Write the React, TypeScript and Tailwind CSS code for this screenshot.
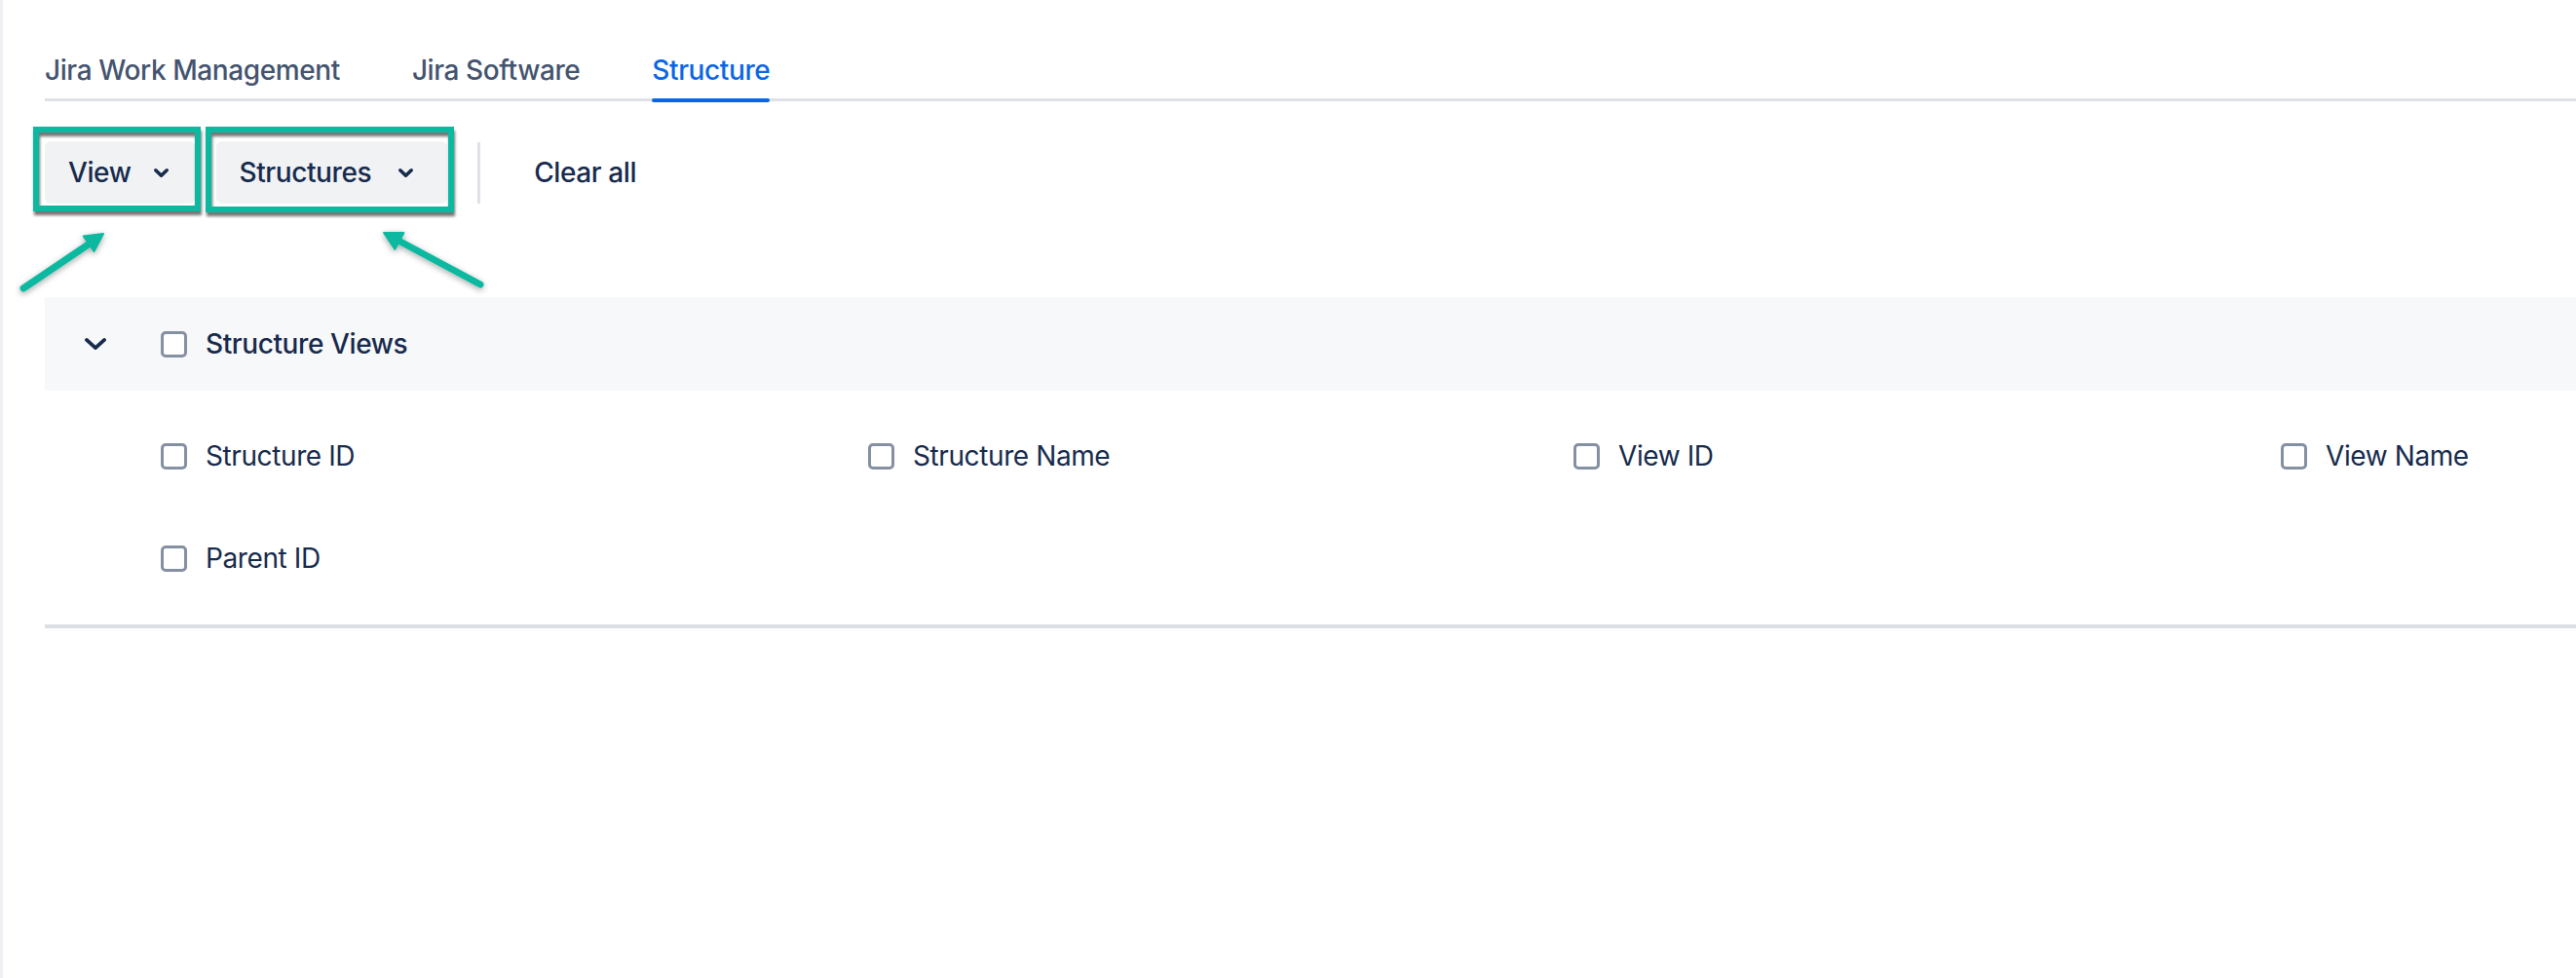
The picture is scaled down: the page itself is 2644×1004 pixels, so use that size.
import React from "react";

const Chevron = ({ w, h, sw }: { w: number; h: number; sw: number }) => (
  <svg width={w} height={h} viewBox={`0 0 ${w} ${h}`} fill="none">
    <path
      d={`M${sw / 2 + 1} ${sw / 2 + 1} L${w / 2} ${h - sw / 2 - 1} L${w - sw / 2 - 1} ${sw / 2 + 1}`}
      stroke="#172b4d"
      strokeWidth={sw}
      strokeLinecap="round"
      strokeLinejoin="round"
    />
  </svg>
);

const Checkbox = () => (
  <span className="block w-[27px] h-[27px] rounded-[5px] border-[3.5px] border-[#8590a2] bg-white shrink-0" />
);

const Item = ({ label }: { label: string }) => (
  <div className="flex items-center gap-[19px] h-[28px]">
    <Checkbox />
    <span className="text-[28px] leading-[40px] text-[#172b4d]">{label}</span>
  </div>
);

export default function App() {
  return (
    <div className="relative min-h-screen w-full overflow-hidden bg-white border-l-[3px] border-[#eef0f3] font-['Inter','Liberation_Sans',sans-serif] tracking-[-0.4px]">
      <div className="pl-[43px] pt-[52px]">
        {/* Tabs */}
        <div className="flex gap-[74px] border-b-[3px] border-[#dfe1e6] text-[28px] font-medium leading-[40px]">
          <div className="pb-[9px] text-[#44546f]">Jira Work Management</div>
          <div className="pb-[9px] text-[#44546f]">Jira Software</div>
          <div className="relative pb-[9px] text-[#0c66e4]">
            Structure
            <span className="absolute left-0 right-0 -bottom-[4px] h-[4px] rounded-[2px] bg-[#0c66e4]" />
          </div>
        </div>

        {/* Toolbar */}
        <div className="mt-[41px] flex items-center h-[64px]">
          <button className="flex items-center h-[64px] pl-[24px] pr-[26px] gap-[22px] rounded-[6px] bg-[#f1f2f4] text-[28px] font-medium text-[#172b4d]">
            <span>View</span>
            <Chevron w={17} h={11} sw={3.6} />
          </button>
          <button className="ml-[22px] flex items-center h-[64px] pl-[24px] pr-[34px] gap-[27px] rounded-[6px] bg-[#f1f2f4] text-[28px] font-medium text-[#172b4d]">
            <span>Structures</span>
            <Chevron w={17} h={11} sw={3.6} />
          </button>
          <div className="ml-[31px] w-[3px] h-[63px] bg-[#dfe1e6]" />
          <button className="ml-[31px] flex items-center h-[64px] px-[24px] text-[28px] font-medium text-[#172b4d]">
            Clear all
          </button>
        </div>

        {/* Section header */}
        <div className="mt-[96px] flex items-center h-[96px] bg-[#f7f8f9] pl-[40px]">
          <Chevron w={24} h={14} sw={3.8} />
          <div className="ml-[55px] flex items-center gap-[19px]">
            <Checkbox />
            <span className="text-[28px] leading-[40px] font-medium text-[#172b4d]">Structure Views</span>
          </div>
        </div>

        {/* Items */}
        <div className="pl-[119px] pt-[53px] pb-[54px] grid grid-cols-[726px_724px_726px_1fr] gap-y-[77px]">
          <Item label="Structure ID" />
          <Item label="Structure Name" />
          <Item label="View ID" />
          <Item label="View Name" />
          <Item label="Parent ID" />
        </div>
        <div className="h-[4px] bg-[#dcdfe4]" />
      </div>

      {/* Annotation overlay */}
      <svg className="absolute -left-[3px] top-0 pointer-events-none" width="540" height="320" viewBox="0 0 540 320">
        <defs>
          <filter id="frameShadow" x="-10%" y="-10%" width="130%" height="140%">
            <feDropShadow dx="1" dy="4" stdDeviation="1.5" floodColor="#000" floodOpacity="0.55" />
          </filter>
          <filter id="arrowShadow" x="-30%" y="-30%" width="160%" height="160%">
            <feDropShadow dx="0" dy="2" stdDeviation="3" floodColor="#000" floodOpacity="0.35" />
          </filter>
        </defs>
        <g filter="url(#frameShadow)" fill="none" stroke="#0db8a0" strokeWidth="6">
          <rect x="37" y="133" width="166" height="81" />
          <rect x="214" y="133" width="249" height="82" />
        </g>
        <g filter="url(#arrowShadow)">
          <line x1="24" y1="296" x2="92" y2="250" stroke="#0db8a0" strokeWidth="7" strokeLinecap="round" />
          <polygon points="106,240 96.5,258 85.7,242.4" fill="#0db8a0" stroke="#0db8a0" strokeWidth="2" strokeLinejoin="round" />
          <line x1="493" y1="292" x2="409" y2="247" stroke="#0db8a0" strokeWidth="7" strokeLinecap="round" />
          <polygon points="394,239 414.4,239.1 405.4,255.9" fill="#0db8a0" stroke="#0db8a0" strokeWidth="2" strokeLinejoin="round" />
        </g>
      </svg>
    </div>
  );
}
